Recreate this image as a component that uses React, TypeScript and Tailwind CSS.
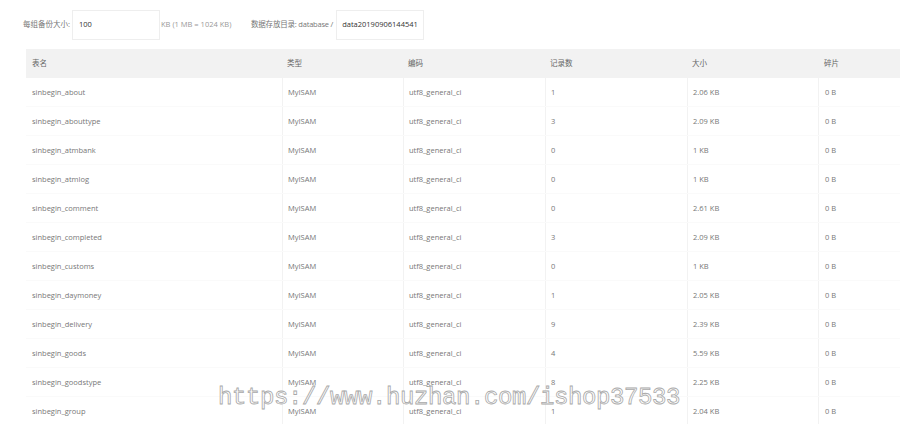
import React from "react";

const rows: [string, string, string][] = [
  ["sinbegin_about", "1", "2.06 KB"],
  ["sinbegin_abouttype", "3", "2.09 KB"],
  ["sinbegin_atmbank", "0", "1 KB"],
  ["sinbegin_atmlog", "0", "1 KB"],
  ["sinbegin_comment", "0", "2.61 KB"],
  ["sinbegin_completed", "3", "2.09 KB"],
  ["sinbegin_customs", "0", "1 KB"],
  ["sinbegin_daymoney", "1", "2.05 KB"],
  ["sinbegin_delivery", "9", "2.39 KB"],
  ["sinbegin_goods", "4", "5.59 KB"],
  ["sinbegin_goodstype", "8", "2.25 KB"],
  ["sinbegin_group", "1", "2.04 KB"],
];

const cols = "grid grid-cols-[256px_121px_142px_142px_131px_1fr]";

export default function App() {
  return (
    <div
      className="relative w-[900px] h-[424px] overflow-hidden bg-white text-[7.5px] text-[#777] whitespace-nowrap"
      style={{ fontFamily: '"Open Sans", "Noto Sans CJK SC", sans-serif' }}
    >
      <div className="flex items-center h-[30px] mt-[10px] pl-[23px]">
        <span className="w-[49px]">每组备份大小:</span>
        <div className="w-[88px] h-[30px] border border-[#eeeeee] flex items-center pl-[6px] text-[#333]">100</div>
        <span className="ml-[1px] w-[90px] text-[#999]">KB (1 MB = 1024 KB)</span>
        <span className="text-[#777] tracking-[-0.2px]">数据存放目录: database /</span>
        <div className="ml-[3px] w-[88px] h-[30px] border border-[#eeeeee] flex items-center pl-[5px] text-[#333]">data20190906144541</div>
      </div>
      <div className="ml-[26px] mt-[9px]">
        <div className={`${cols} h-[29px] bg-[#f2f2f2] items-center text-[#666] pt-[1px]`}>
          <div className="pl-[6px]">表名</div>
          <div className="pl-[5px]">类型</div>
          <div className="pl-[5px]">编码</div>
          <div className="pl-[5px]">记录数</div>
          <div className="pl-[5px]">大小</div>
          <div className="pl-[6px]">碎片</div>
        </div>
        {rows.map(([name, count, size]) => (
          <div key={name} className={`${cols} h-[29px] border-b border-[#fafafa]`}>
            <div className="pl-[6px] pt-[2px] flex items-center">{name}</div>
            <div className="pl-[5px] pt-[2px] flex items-center border-l border-[#f2f2f2]">MyISAM</div>
            <div className="pl-[5px] pt-[2px] flex items-center border-l border-[#f2f2f2]">utf8_general_ci</div>
            <div className="pl-[5px] pt-[2px] flex items-center border-l border-[#f2f2f2]">{count}</div>
            <div className="pl-[5px] pt-[2px] flex items-center border-l border-[#f2f2f2]">{size}</div>
            <div className="pl-[6px] pt-[2px] flex items-center border-l border-[#f2f2f2]">0 B</div>
          </div>
        ))}
      </div>
      <div
        className="absolute left-[218px] top-[386px] text-[24px] leading-none text-white tracking-[-0.4px] [-webkit-text-stroke:0.8px_#a8a8a8]"
        style={{ fontFamily: '"Liberation Mono", monospace' }}
      >
        https://www.huzhan.com/ishop37533
      </div>
    </div>
  );
}
